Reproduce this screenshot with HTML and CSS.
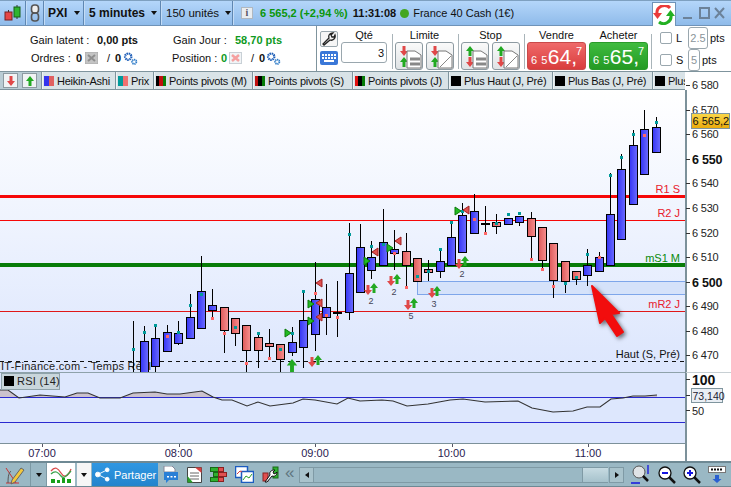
FILE: index.html
```html
<!DOCTYPE html>
<html lang="fr">
<head>
<meta charset="utf-8">
<title>PXI</title>
<link rel="stylesheet" href="styles.css">
</head>
<body>
<svg class="defs" width="0" height="0">
  <defs>
    <linearGradient id="gBlue" x1="0" x2="1" y1="0" y2="0"><stop offset="0" stop-color="#3434f4"/><stop offset="1" stop-color="#6c6cff"/></linearGradient>
    <linearGradient id="gRed" x1="0" x2="1" y1="0" y2="0"><stop offset="0" stop-color="#dd5a5a"/><stop offset="1" stop-color="#f79090"/></linearGradient>
    <linearGradient id="gPlot" x1="0" x2="0" y1="0" y2="1"><stop offset="0" stop-color="#ffffff"/><stop offset="1" stop-color="#dce6fd"/></linearGradient>
    <linearGradient id="gTag" x1="0" x2="0" y1="0" y2="1"><stop offset="0" stop-color="#fbd84a"/><stop offset="1" stop-color="#eaa90a"/></linearGradient>
    <symbol id="up" viewBox="0 0 8 10"><path d="M4 0 8 5H5.500V10H2.500V5H0Z" fill="#22a922"/></symbol>
    <symbol id="down" viewBox="0 0 8 10"><path d="M4 10 8 5H5.500V0H2.500V5H0Z" fill="#e04848"/></symbol>
    <symbol id="gears" viewBox="0 0 16 14">
      <circle cx="5.500" cy="5" r="3.400" fill="none" stroke="#1f5fb8" stroke-width="2.400" stroke-dasharray="1.600 .7"/>
      <circle cx="12" cy="10.500" r="2.300" fill="none" stroke="#2f7cc8" stroke-width="2" stroke-dasharray="1.300 .6"/>
    </symbol>
    <symbol id="docbars" viewBox="0 0 26 26">
      <path d="M11 8H19L25 12V25H11Z" fill="#fff" stroke="#777"/><path d="M14 16H24M14 21H24" stroke="#888" stroke-width="3"/>
    </symbol>
    <symbol id="docslash" viewBox="0 0 26 26">
      <path d="M11 8H19L25 12V25H11Z" fill="#fff" stroke="#777"/><path d="M13 24 24 13" stroke="#888"/>
    </symbol>
  </defs>
</svg>

<div class="app">
  <header class="titlebar">
    <div class="tb-cell tb-logo">
      <svg width="18" height="18" viewBox="0 0 18 18"><path d="M4.500 6V16M13 1V15" stroke="#333"/><rect x="1" y="8" width="7" height="8" fill="#e64646" stroke="#722"/><rect x="10" y="3" width="6" height="10" fill="#2fb52f" stroke="#175f17"/></svg>
    </div>
    <div class="tb-cell tb-link">
      <svg width="10" height="18" viewBox="0 0 10 18" fill="none" stroke="#555" stroke-width="1.600"><rect x="1.500" y="1" width="7" height="8" rx="3" fill="#eee"/><rect x="1.500" y="9" width="7" height="8" rx="3"/></svg>
    </div>
    <div class="tb-cell tb-sym"><b>PXI</b><i class="caret"></i></div>
    <div class="tb-cell tb-period"><b>5 minutes</b><i class="caret"></i></div>
    <div class="tb-cell tb-units"><span>150 unités</span><i class="caret"></i></div>
    <div class="tb-quote">
      <span class="info">i</span>
      <b class="quote">6 565,2 (+2,94 %)</b>
      <b class="clock">11:31:08</b>
      <i class="live"></i>
      <span class="inst">France 40 Cash (1€)</span>
    </div>
    <div class="tb-sync">
      <svg width="22" height="20" viewBox="0 0 22 20" fill="none"><path d="M17 3A7.500 7.500 0 0 0 4 9" stroke="#ea3a3a" stroke-width="3"/><path d="M0 8H9L4.500 14Z" fill="#ea3a3a"/><path d="M6 17A7.500 7.500 0 0 0 18 10" stroke="#22b022" stroke-width="3"/><path d="M13 11H22L17.500 5Z" fill="#22b022"/></svg>
    </div>
    <div class="tb-win">
      <svg width="42" height="12" viewBox="0 0 42 12" fill="none" stroke="#6c8299" stroke-width="2"><path d="M0 11H9"/><rect x="17" y="1" width="9" height="10"/><path d="M32 1 41 11M41 1 32 11"/></svg>
    </div>
  </header>

  <section class="toolbar">
    <div class="acct">
      <div class="acct-row"><span class="c1">Gain latent :</span><b class="v1">0,00 pts</b><span class="c2">Gain Jour :</span><b class="v2 green">58,70 pts</b></div>
      <div class="acct-row r2">
        <span class="c3">Ordres :</span><b class="n1">0</b>
        <svg class="ico1" width="13" height="12" viewBox="0 0 13 12"><rect width="13" height="12" fill="#c4c4c4" stroke="#aaa"/><path d="M3 3 10 9M10 3 3 9" stroke="#8e8e8e" stroke-width="2"/></svg>
        <span class="sl1">/</span><b class="n2">0</b>
        <svg class="gear1" width="15" height="13"><use href="#gears"/></svg>
        <span class="c4">Position :</span><b class="n3 green">0</b>
        <svg class="ico2" width="13" height="12" viewBox="0 0 13 12"><rect x=".5" y=".5" width="12" height="11" fill="#f1f4f6" stroke="#c8d0d6"/><path d="M3 3 10 9M10 3 3 9" stroke="#f5a0a0" stroke-width="2.500"/></svg>
        <span class="sl2">/</span><b class="n4">0</b>
        <svg class="gear2" width="15" height="13"><use href="#gears"/></svg>
      </div>
    </div>

    <div class="order">
      <div class="tools">
        <button class="btn-tool"><svg width="14" height="14" viewBox="0 0 14 14" fill="none" stroke="#222" stroke-width="1.300"><path d="M2 13 1 12 7 6C6 3 8 1 11 1L9 3 10 5 12 5 13 3C14 6 11 9 8 8L2 13Z"/></svg></button>
        <button class="btn-kbd"><svg width="16" height="10" viewBox="0 0 16 10" fill="#fff"><path d="M1 1h2v2H1zM4 1h2v2H4zM7 1h2v2H7zM10 1h2v2h-2zM13 1h2v2h-2zM1 4h2v2H1zM4 4h2v2H4zM7 4h2v2H7zM10 4h2v2h-2zM13 4h2v2h-2zM3 7h10v2H3z"/></svg></button>
      </div>
      <div class="group g-qty"><label class="lbl">Qté</label><div class="qty">3</div></div>
      <i class="vsep"></i>
      <div class="group g-pair"><label class="lbl">Limite</label>
        <div class="pair">
          <button class="btn-ord"><svg class="a" width="8" height="10"><use href="#down"/></svg><svg class="b" width="8" height="10"><use href="#up"/></svg><svg class="d" width="26" height="26"><use href="#docbars"/></svg></button>
          <button class="btn-ord"><svg class="a" width="8" height="10"><use href="#down"/></svg><svg class="b" width="8" height="10"><use href="#up"/></svg><svg class="d" width="26" height="26"><use href="#docslash"/></svg></button>
        </div>
      </div>
      <i class="vsep"></i>
      <div class="group g-pair"><label class="lbl">Stop</label>
        <div class="pair">
          <button class="btn-ord"><svg class="a" width="8" height="10"><use href="#up"/></svg><svg class="b" width="8" height="10"><use href="#down"/></svg><svg class="d" width="26" height="26"><use href="#docbars"/></svg></button>
          <button class="btn-ord"><svg class="a" width="8" height="10"><use href="#up"/></svg><svg class="b" width="8" height="10"><use href="#down"/></svg><svg class="d" width="26" height="26"><use href="#docslash"/></svg></button>
        </div>
      </div>
      <i class="vsep"></i>
      <div class="group g-price"><label class="lbl">Vendre</label>
        <div class="price sell"><span class="pfx">6 5</span><span class="big">64,</span><span class="sup">7</span></div>
      </div>
      <div class="group g-price"><label class="lbl">Acheter</label>
        <div class="price buy"><span class="pfx">6 5</span><span class="big">65,</span><span class="sup">7</span></div>
      </div>
      <i class="vsep"></i>
      <div class="protect">
        <div class="prow"><i class="check"></i><span class="pl">L</span><span class="pbox wide">2.5</span><span>pts</span></div>
        <div class="prow"><i class="check"></i><span class="pl">S</span><span class="pbox">5</span><span>pts</span></div>
      </div>
    </div>
  </section>

  <main class="workspace">
    <div class="panes">
      <nav class="tabs">
        <button class="tab-btn"><svg width="10" height="10"><use href="#down"/></svg></button>
        <button class="tab-btn"><svg width="10" height="10"><use href="#up"/></svg></button>
        <div class="tab"><i class="sw s-ha"></i>Heikin-Ashi</div>
        <div class="tab"><i class="sw s-px"></i>Prix</div>
        <div class="tab"><i class="sw s-pm"></i>Points pivots (M)</div>
        <div class="tab"><i class="sw s-ps"></i>Points pivots (S)</div>
        <div class="tab"><i class="sw s-pj"></i>Points pivots (J)</div>
        <div class="tab"><i class="sw s-k"></i>Plus Haut (J, Pré)</div>
        <div class="tab"><i class="sw s-k"></i>Plus Bas (J, Pré)</div>
        <div class="tab"><i class="sw s-k"></i>Plus</div>
      </nav>

      <svg class="plot" width="685" height="282" viewBox="0 90 685 282">
        <rect x="0" y="90" width="685" height="282" fill="url(#gPlot)"/>
        <rect x="417.500" y="281.500" width="270" height="13" fill="#d5e2fa" stroke="#7ea6ea"/>
        <text class="cap" x="1" y="370">IT-Finance.com - Temps Réel</text>
        <g shape-rendering="crispEdges" fill="none">
          <path d="M0 196H685" stroke="#f60808" stroke-width="3"/>
          <path d="M0 220.500H685" stroke="#f60808"/>
          <path d="M0 265H685" stroke="#087c08" stroke-width="4"/>
          <path d="M0 311.500H685" stroke="#e01818"/>
          <path d="M0 361.500H685" stroke="#111" stroke-dasharray="4 4"/>
          <path class="wick" d="M133.500 321V372M144.500 326V341M155.500 326V372M167.500 325V332M178.500 321V345M190.500 294V339M201.500 256V291M212.500 289V320M224.500 330V353M235.500 333V346M246.500 350V372M258.500 333V368M269.500 329V360M280.500 359V372M292.500 327V356M303.500 291V368M315.500 262V351M326.500 284V335M337.500 281V337M349.500 223V320M360.500 224V247M371.500 241V279M383.500 209V265M394.500 230V270M406.500 233V287M428.500 260V281M440.500 249V278M451.500 222V237M462.500 203V215M474.500 194V211M485.500 206V232M496.500 214V234M508.500 224V225M519.500 222V226M531.500 212V261M542.500 260V271M553.500 280V298M565.500 281V293M576.500 279V285M587.500 249V286M599.500 252V257M610.500 173V214M621.500 154V169M633.500 130V145M644.500 110V129M656.500 117V127"/>
          <g class="bl">
            <rect x="140.500" y="341.500" width="8" height="32"/><rect x="151.500" y="338.500" width="8" height="28"/><rect x="163.500" y="332.500" width="8" height="19"/><rect x="174.500" y="333.500" width="8" height="10"/><rect x="186.500" y="317.500" width="8" height="21"/><rect x="197.500" y="291.500" width="8" height="37"/><rect x="208.500" y="305.500" width="8" height="5"/><rect x="288.500" y="342.500" width="8" height="10"/><rect x="299.500" y="320.500" width="8" height="27"/><rect x="311.500" y="299.500" width="8" height="35"/><rect x="322.500" y="307.500" width="8" height="10"/><rect x="345.500" y="273.500" width="8" height="39"/><rect x="356.500" y="247.500" width="8" height="45"/><rect x="367.500" y="257.500" width="8" height="13"/><rect x="379.500" y="242.500" width="8" height="23"/><rect x="390.500" y="249.500" width="8" height="4"/><rect x="436.500" y="261.500" width="8" height="10"/><rect x="447.500" y="237.500" width="8" height="28"/><rect x="458.500" y="215.500" width="8" height="37"/><rect x="470.500" y="211.500" width="8" height="22"/><rect x="504.500" y="218.500" width="8" height="6"/><rect x="515.500" y="216.500" width="8" height="6"/><rect x="583.500" y="265.500" width="8" height="10"/><rect x="595.500" y="257.500" width="8" height="14"/><rect x="606.500" y="214.500" width="8" height="51"/><rect x="617.500" y="169.500" width="8" height="70"/><rect x="629.500" y="145.500" width="8" height="59"/><rect x="640.500" y="129.500" width="8" height="45"/><rect x="652.500" y="127.500" width="8" height="25"/>
          </g>
          <g class="rd">
            <rect x="220.500" y="307.500" width="8" height="23"/><rect x="231.500" y="318.500" width="8" height="15"/><rect x="242.500" y="325.500" width="8" height="25"/><rect x="254.500" y="337.500" width="8" height="13"/><rect x="265.500" y="343.500" width="8" height="3"/><rect x="276.500" y="344.500" width="8" height="15"/><rect x="402.500" y="251.500" width="8" height="14"/><rect x="413.500" y="258.500" width="8" height="23"/><rect x="424.500" y="269.500" width="8" height="3"/><rect x="492.500" y="222.500" width="8" height="4"/><rect x="527.500" y="218.500" width="8" height="18"/><rect x="538.500" y="227.500" width="8" height="33"/><rect x="549.500" y="243.500" width="8" height="37"/><rect x="561.500" y="261.500" width="8" height="20"/><rect x="572.500" y="271.500" width="8" height="8"/>
          </g>
          <path d="M333 312.500H342M481 223.500H490" stroke="#000" stroke-width="2"/>
          <g fill="#009a9a">
            <rect x="132" y="348" width="3" height="3"/><rect x="143" y="331" width="3" height="3"/><rect x="154" y="324" width="3" height="3"/><rect x="177" y="331" width="3" height="3"/><rect x="189" y="304" width="3" height="3"/><rect x="200" y="293" width="3" height="3"/><rect x="234" y="326" width="3" height="3"/><rect x="257" y="332" width="3" height="3"/><rect x="279" y="348" width="3" height="3"/><rect x="291" y="332" width="3" height="3"/><rect x="302" y="290" width="3" height="3"/><rect x="348" y="233" width="3" height="3"/><rect x="370" y="245" width="3" height="3"/><rect x="382" y="243" width="3" height="3"/><rect x="416" y="275" width="3" height="3"/><rect x="427" y="270" width="3" height="3"/><rect x="439" y="248" width="3" height="3"/><rect x="450" y="221" width="3" height="3"/><rect x="461" y="210" width="3" height="3"/><rect x="495" y="222" width="3" height="3"/><rect x="507" y="213" width="3" height="3"/><rect x="518" y="212" width="3" height="3"/><rect x="564" y="282" width="3" height="3"/><rect x="575" y="276" width="3" height="3"/><rect x="586" y="253" width="3" height="3"/><rect x="609" y="174" width="3" height="3"/><rect x="620" y="156" width="3" height="3"/><rect x="632" y="133" width="3" height="3"/><rect x="655" y="121" width="3" height="3"/>
          </g>
          <g fill="#ff6666">
            <rect x="166" y="335" width="3" height="3"/><rect x="211" y="317" width="3" height="3"/><rect x="223" y="332" width="3" height="3"/><rect x="245" y="362" width="3" height="3"/><rect x="268" y="357" width="3" height="3"/><rect x="314" y="292" width="3" height="3"/><rect x="325" y="314" width="3" height="3"/><rect x="336" y="316" width="3" height="3"/><rect x="393" y="252" width="3" height="3"/><rect x="405" y="286" width="3" height="3"/><rect x="473" y="218" width="3" height="3"/><rect x="484" y="232" width="3" height="3"/><rect x="530" y="258" width="3" height="3"/><rect x="541" y="268" width="3" height="3"/><rect x="552" y="285" width="3" height="3"/><rect x="598" y="256" width="3" height="3"/><rect x="643" y="134" width="3" height="3"/>
          </g>
        </g>
        <g class="tri-g"><path d="M285 329V337L291 333ZM308 300V308L314 304ZM308 317V325L314 321ZM364 257V265L370 261ZM387 244V252L393 248ZM455 207V215L461 211Z"/></g>
        <g class="tri-r"><path d="M322 279V287L316 283ZM322 299V307L316 303ZM322 313V321L316 317ZM378 248V256L372 252ZM401 237V245L395 241ZM469 206V214L463 210Z"/></g>
        <use href="#down" x="364" y="285" width="8" height="10"/><use href="#up" x="370" y="283" width="8" height="10"/>
        <use href="#down" x="387" y="276" width="8" height="10"/><use href="#up" x="393" y="274" width="8" height="10"/>
        <use href="#down" x="404" y="300" width="8" height="10"/><use href="#up" x="410" y="298" width="8" height="10"/>
        <use href="#down" x="428" y="288" width="8" height="10"/><use href="#up" x="433" y="286" width="8" height="10"/>
        <use href="#down" x="455" y="259" width="8" height="10"/><use href="#up" x="461" y="256" width="8" height="10"/>
        <use href="#up" x="286" y="359" width="12" height="13"/>
        <use href="#down" x="308" y="357" width="8" height="10"/><use href="#up" x="314" y="355" width="8" height="10"/>
        <g class="mark"><text x="371" y="304">2</text><text x="394" y="295">2</text><text x="411" y="319">5</text><text x="434" y="307">3</text><text x="462" y="277">2</text></g>
        <g class="lv">
          <text x="680" y="193" class="l-r">R1 S</text>
          <text x="680" y="217" class="l-r">R2 J</text>
          <text x="680" y="262" class="l-g">mS1 M</text>
          <text x="680" y="308" class="l-r">mR2 J</text>
          <text x="680" y="358" class="l-k">Haut (S, Pré)</text>
        </g>
        <path class="pointer" d="M592 286 619 313 611 314 623 332 617 336 605 318 600 323Z"/>
      </svg>

      <svg class="rsi" width="685" height="71" viewBox="0 372 685 71">
        <defs><clipPath id="cAbove"><rect x="0" y="372" width="685" height="25"/></clipPath></defs>
        <rect x="0" y="372" width="685" height="71" fill="#dde7fd"/>
        <path d="M0 372.500H685" stroke="#8ea2aa" shape-rendering="crispEdges"/>
        <path clip-path="url(#cAbove)" fill="#cbc2cd" d="M0 397V390L8 390 19 398 40 395 65 397 77 393 88 393 100 398 120 398 133 393 155 392 167 394 180 394 202 391 213 397 611 397 623 398 633 396 645 396 657 395V397Z"/>
        <g shape-rendering="crispEdges" fill="none" stroke="#2a2ad0"><path d="M0 397.500H685M0 422.500H685"/></g>
        <path fill="none" stroke="#333" stroke-width="1.100" d="M0 390 8 390 19 398 40 395 65 397 77 393 88 393 100 398 120 398 133 393 155 392 167 394 180 394 202 391 213 397 222 400 232 400 247 406 258 402 270 406 293 403 303 399 315 400 337 404 348 398 360 401 382 400 393 401 407 406 428 404 450 400 463 399 485 402 518 401 532 408 553 412 573 411 587 407 600 407 611 399 623 398 633 396 645 396 657 395"/>
        <rect class="leg" x="1.500" y="373.500" width="58" height="16"/>
        <rect x="4" y="376" width="10" height="10" fill="#000"/>
        <text class="cap" x="17" y="385">RSI (14)</text>
      </svg>
    </div>

    <svg class="axis" width="46" height="371" viewBox="685 72 46 371">
      <rect x="685" y="72" width="46" height="371" fill="#fff"/>
      <g shape-rendering="crispEdges">
        <path d="M685.500 90V443M686.500 90V443" stroke="#7c919a"/>
        <path d="M686 372.500H731" stroke="#c8d0d4"/>
        <path stroke="#333" d="M686 85.500H690M686 110.500H690M686 134.500H690M686 159.500H690M686 183.500H690M686 208.500H690M686 233.500H690M686 257.500H690M686 282.500H690M686 306.500H690M686 331.500H690M686 355.500H690M686 379.500H690M686 395.500H690M686 410.500H690"/>
      </g>
      <g class="px">
        <text x="692" y="89">6 580</text><text x="692" y="114">6 570</text><text x="692" y="138">6 560</text><text class="bd" x="692" y="164">6 550</text><text x="692" y="187">6 540</text><text x="692" y="212">6 530</text><text x="692" y="237">6 520</text><text x="692" y="261">6 510</text><text class="bd" x="692" y="287">6 500</text><text x="692" y="310">6 490</text><text x="692" y="335">6 480</text><text x="692" y="359">6 470</text>
        <text class="bd hi" x="692" y="385">100</text><text x="692" y="415">50</text>
      </g>
      <rect x="691.500" y="113.500" width="38" height="15" fill="url(#gTag)" stroke="#7f959e"/>
      <text class="tagt" x="692.500" y="125">6 565,2</text>
      <rect x="691.500" y="388.500" width="31" height="14" fill="#e9eef4" stroke="#7f959e"/>
      <text class="tagt sm" x="692.500" y="399.500">73,140</text>
    </svg>
  </main>

  <div class="timeaxis">
    <span class="t">07:00</span><span class="t">08:00</span><span class="t">09:00</span><span class="t">10:00</span><span class="t">11:00</span>
  </div>

  <footer class="bottombar">
    <button class="bb bb-pen"><svg width="20" height="20" viewBox="0 0 20 20" fill="none"><path d="M1 3 11 18M1 18H14" stroke="#c33"/><path d="M3 18C3 10 4 8 6 6" stroke="#555"/><path d="M7 15 16 3 19 5 10 17 6 19Z" fill="#f3c83c" stroke="#666"/></svg></button>
    <button class="bb bb-caret"><i class="caret"></i></button>
    <button class="bb bb-ind"><svg width="22" height="18" viewBox="0 0 22 18" fill="none"><path d="M1 5C5 0 8 2 11 7S18 11 21 3" stroke="#d84a4a" stroke-width="1.300"/><path d="M1 8C5 4 8 6 11 10S18 8 21 5" stroke="#3aa24a" stroke-width="1.300"/><path d="M1 17V13H5V17ZM7 17V14H10V17ZM12 17V12H15V17ZM17 17V13H21V17Z" fill="#19a019"/></svg></button>
    <button class="bb bb-caret2"><i class="caret"></i></button>
    <button class="share"><svg width="15" height="15" viewBox="0 0 16 16" fill="#fff" stroke="#fff"><circle cx="3" cy="8" r="2.500"/><circle cx="13" cy="3" r="2"/><circle cx="13" cy="13" r="2"/><path d="M3 8 13 3M3 8 13 13"/></svg><span>Partager</span></button>
    <div class="bb-icons">
      <svg width="16" height="17" viewBox="0 0 16 17"><path d="M1 0H9L12 3V6H1Z" fill="#fff" stroke="#889"/><path d="M1 6H15V14H6L3 17V14H1Z" fill="#2a7fd6"/><path d="M4 10h2v1.500H4zM7.500 10h2v1.500h-2zM11 10h2v1.500h-2z" fill="#fff"/></svg>
      <svg width="15" height="17" viewBox="0 0 15 17"><path d="M.5 1.500H14.500V16.500H.5Z" fill="#fff" stroke="#444"/><path d="M3 7H12M3 10H12M3 13H12" stroke="#666"/><path d="M8 1.500 14.500 1.500 14.500 7Z" fill="#d84040"/><path d="M.5 16.500V10L6 16.500Z" fill="#2aa02a"/></svg>
      <svg width="17" height="17" viewBox="0 0 17 17" shape-rendering="crispEdges"><path d="M.5 1.500H8.500V5.500H.5ZM3.500 6.500H8.500V10.500H3.500ZM.5 11.500H8.500V15.500H.5Z" fill="#2fb02f" stroke="#176a17"/><path d="M8.500 1.500H13.500V5.500H8.500ZM8.500 6.500H16.500V10.500H8.500ZM8.500 11.500H13.500V15.500H8.500Z" fill="#e05050" stroke="#8a2020"/></svg>
      <svg width="19" height="17" viewBox="0 0 19 17"><rect x=".5" y=".5" width="12" height="11" fill="#fff" stroke="#1c5cc0" stroke-width="1.500"/><rect x="6.500" y="5.500" width="12" height="11" fill="#fff" stroke="#1c5cc0" stroke-width="1.500"/><path d="M8 14 11 10 14 12 17 8" fill="none" stroke="#2aa02a"/><path d="M2 8 5 5 7 6" fill="none" stroke="#d84040"/></svg>
      <svg width="17" height="17" viewBox="0 0 17 17"><rect x="11" y="1" width="5" height="11" fill="#2fb02f" stroke="#176a17"/><rect x="1" y="7" width="5" height="8" fill="#e05050" stroke="#8a2020"/><path d="M3 16 8 9C7 6 9 4 13 4L11 6 12 8 14 7 15 6C15 9 13 11 10 10L5 16Z" fill="#fff" stroke="#111"/></svg>
    </div>
    <span class="chev">«</span>
    <div class="scroll">
      <button class="sb-btn"><i class="arr-l"></i></button>
      <div class="sb-track"><i class="sb-thumb"></i></div>
      <button class="sb-btn"><i class="arr-r"></i></button>
    </div>
    <div class="zooms">
      <svg width="21" height="21" viewBox="0 0 21 21"><circle cx="9" cy="8" r="6" fill="#dfe3e6" stroke="#555"/><path d="M13 12 18 17" stroke="#111" stroke-width="2.500"/><path d="M18 1V10M1 19H10" stroke="#1414e0" stroke-width="1.300"/></svg>
      <svg width="18" height="18" viewBox="0 0 18 18"><circle cx="7" cy="7" r="6" fill="#fff" stroke="#111" stroke-width="1.300"/><path d="M4 7H10" stroke="#1414e0" stroke-width="2"/><path d="M11 11 17 17" stroke="#111" stroke-width="2.500"/></svg>
      <svg width="18" height="18" viewBox="0 0 18 18"><circle cx="7" cy="7" r="6" fill="#fff" stroke="#111" stroke-width="1.300"/><path d="M4 7H10M7 4V10" stroke="#1414e0" stroke-width="2"/><path d="M11 11 17 17" stroke="#111" stroke-width="2.500"/></svg>
      <svg width="18" height="17" viewBox="0 0 18 17"><rect x=".5" y=".5" width="17" height="6" fill="#fff" stroke="#777"/><path d="M3 3.500H15" stroke="#111" stroke-width="2" stroke-dasharray="2 1"/><path d="M7 9H11V13H13.500L9 17 4.500 13H7Z" fill="#2a5fd0"/></svg>
    </div>
  </footer>
</div>
</body>
</html>
```

FILE: styles.css
```css
* { box-sizing: border-box; }
html, body { margin: 0; padding: 0; }
body { width: 731px; height: 487px; overflow: hidden; font: 11px "Liberation Sans", Arial, sans-serif; color: #111; background: #fff; }
button { margin: 0; padding: 0; font: inherit; cursor: default; }
.defs { position: absolute; }
.app { width: 731px; height: 487px; display: flex; flex-direction: column; overflow: hidden; }
.green { color: #0f9a1e; }

/* Title bar */
.titlebar { height: 26px; flex: none; display: flex; align-items: stretch; white-space: nowrap; background: linear-gradient(#b4d6fa, #8fbbea); border-top: 1px solid #7ea0c0; border-bottom: 1px solid #6f93b8; }
.tb-cell { display: flex; align-items: center; border-right: 1px solid #5f87b2; box-shadow: 1px 0 0 #c3dcf6; flex: none; }
.tb-logo { width: 26px; justify-content: center; }
.tb-link { width: 18px; justify-content: center; }
.tb-sym { width: 40px; padding-left: 4px; font-size: 12px; gap: 7px; }
.tb-period { width: 77px; padding-left: 5px; font-size: 12px; gap: 6px; }
.tb-units { width: 72px; padding-left: 5px; font-size: 11.500px; gap: 6px; }
.caret { display: inline-block; width: 0; height: 0; border: 3.500px solid transparent; border-top: 4px solid #111; border-bottom: 0; }
.tb-quote { flex: 1; display: flex; align-items: center; padding-left: 8px; font-size: 11px; }
.info { width: 12px; height: 12px; background: #e9edf0; border: 1px solid #b0b8c0; font: bold 10px "Liberation Serif", serif; color: #556; text-align: center; line-height: 10px; }
.quote { color: #0a960a; margin-left: 7px; }
.clock { margin-left: 5px; }
.live { width: 9px; height: 9px; border-radius: 50%; background: #44a620; margin-left: 4px; }
.inst { margin-left: 4px; }
.tb-sync { width: 24px; margin-top: 1px; background: #fff; border: 1px solid #6f93b8; border-bottom: 0; display: flex; align-items: center; justify-content: center; margin-bottom: -1px; flex: none; }
.tb-win { width: 55px; display: flex; align-items: center; justify-content: center; flex: none; }

/* Toolbar */
.toolbar { height: 46px; flex: none; display: flex; border-bottom: 1px solid #7f949d; background: #fff; white-space: nowrap; }
.acct { width: 317px; flex: none; border-right: 1px solid #7f949d; padding: 6px 0 0 30px; }
.acct-row { display: flex; align-items: center; height: 16px; }
.r2 { margin-top: 2px; padding-left: 1px; }
.c1 { width: 67px; flex: none; }
.v1 { width: 76px; flex: none; }
.c2 { width: 62px; flex: none; }
.c3 { width: 45px; flex: none; }
.n1 { width: 9px; flex: none; }
.ico1 { margin-right: 9px; flex: none; }
.sl1 { width: 8px; flex: none; }
.n2 { width: 8px; flex: none; }
.gear1 { margin-right: 34px; flex: none; }
.c4 { width: 49px; flex: none; }
.n3 { width: 8px; flex: none; }
.ico2 { margin-right: 9px; flex: none; }
.sl2 { width: 8px; flex: none; }
.n4 { width: 7px; flex: none; }
.order { flex: 1; display: flex; align-items: flex-start; padding: 5px 0 0 3px; }
.tools { width: 18px; display: flex; flex-direction: column; gap: 4px; margin-right: 3px; }
.btn-tool { width: 18px; height: 16px; border: 1px solid #9aa7ae; border-radius: 2px; background: #f6f6f6; display: flex; align-items: center; justify-content: center; }
.btn-kbd { width: 18px; height: 14px; border: 0; border-radius: 2px; background: #3b78d8; display: flex; align-items: center; justify-content: center; }
.group { display: flex; flex-direction: column; align-items: center; }
.lbl { height: 11px; line-height: 8px; }
.g-qty { width: 46px; }
.qty { width: 46px; height: 21px; border: 1px solid #9aa7ae; border-radius: 3px; text-align: right; padding: 2px 2px 0 0; line-height: 16px; }
.vsep { width: 1px; height: 35px; margin: 3px 2px 0 5px; background: #a9b4b9; }
.g-pair { width: 59px; }
.pair { display: flex; gap: 3px; }
.btn-ord { position: relative; width: 28px; height: 28px; border: 1px solid #8d9aa1; border-radius: 3px; background: linear-gradient(#fafafa, #dfe3e5); }
.btn-ord .a { position: absolute; left: 4px; top: 3px; }
.btn-ord .b { position: absolute; left: 4px; top: 14px; }
.btn-ord .d { position: absolute; left: 0; top: 0; }
.g-pair + .vsep { margin-left: 4px; }
.g-price { width: 59px; margin-right: 3px; }
.g-price + .vsep { margin-left: 0; margin-right: 8px; }
.price { width: 59px; height: 28px; border-radius: 3px; color: #fff; display: flex; align-items: flex-end; padding-left: 3px; position: relative; }
.sell { background: linear-gradient(#ef6a6a, #d93d3d); border: 1px solid #c94a4a; }
.buy { background: linear-gradient(#3fbb3f, #249a24); border: 1px solid #2a9a2a; }
.pfx { font-size: 11px; letter-spacing: .5px; line-height: 17px; }
.big { font-size: 21px; line-height: 25px; }
.sup { position: absolute; right: 3px; top: 2px; font-size: 11px; line-height: 13px; }
.protect { display: flex; flex-direction: column; margin-top: -4px; }
.prow { display: flex; align-items: center; height: 22px; }
.check { width: 12px; height: 12px; border: 1px solid #9aa7ae; border-radius: 2px; margin-right: 4px; flex: none; }
.pl { width: 12px; flex: none; }
.pbox { width: 12px; height: 22px; border: 1px solid #9aa7ae; border-radius: 3px; color: #8a949a; text-align: center; line-height: 20px; margin-right: 2px; flex: none; }
.wide { width: 20px; }

/* Workspace */
.workspace { flex: none; height: 371px; display: flex; }
.panes { width: 685px; display: flex; flex-direction: column; flex: none; }
.tabs { height: 18px; flex: none; display: grid; grid-template-columns: 19px 19px 74px 38px 99px 100px 96px 104px 100px 33px; background: #b9ccd4; overflow: hidden; border-bottom: 1px solid #7f949d; padding-left: 3px; }
.tab-btn { width: 15px; height: 15px; margin-top: 1px; border: 1px solid #8d9aa1; background: #f0f3f4; display: flex; align-items: center; justify-content: center; }
.tab { display: flex; align-items: center; gap: 3px; padding-left: 2px; border-left: 1px solid #7f949d; background: #d9e3e7; white-space: nowrap; overflow: hidden; letter-spacing: -.25px; box-shadow: inset 1px 0 0 #eef3f5; }
.sw { display: block; width: 10px; height: 10px; flex: none; }
.s-ha { background: linear-gradient(90deg, #3333ee 50%, #e06060 50%); }
.s-px { background: linear-gradient(90deg, #009a9a 50%, #f07070 50%); }
.s-pm { background: linear-gradient(90deg, #000 33%, #c01010 33% 66%, #087c08 66%); }
.s-ps { background: linear-gradient(90deg, #c01010 33%, #000 33% 66%, #087c08 66%); }
.s-pj { background: linear-gradient(90deg, #e01010 33%, #000 33% 66%, #087c08 66%); }
.s-k { background: #000; }
.plot, .rsi, .axis { display: block; flex: none; }
.wick { stroke: #000; fill: none; }
.bl rect { fill: url(#gBlue); stroke: #000; }
.rd rect { fill: url(#gRed); stroke: #000; }
.cap { font-size: 11px; fill: #222; letter-spacing: .25px; }
.tri-g path { fill: #22bb22; stroke: #0a7a0a; }
.tri-r path { fill: #e05050; stroke: #a02020; }
.mark text { font-size: 9px; fill: #445; text-anchor: middle; }
.lv text { font-size: 11px; text-anchor: end; }
.l-r { fill: #e8202c; }
.l-g { fill: #0a8a0a; }
.l-k { fill: #111; }
.pointer { fill: #f20d0d; stroke: #f20d0d; stroke-width: 2; stroke-linejoin: round; filter: drop-shadow(2px 2px 2px rgba(0,0,0,.55)); }
.leg { fill: #c9d6dc; stroke: #8ea2aa; }
.px text { font-size: 11px; fill: #222; letter-spacing: -.2px; }
.px .bd { font-size: 12.500px; font-weight: bold; fill: #111; letter-spacing: -.2px; }
.px .hi { font-size: 14px; letter-spacing: 0; }
.tagt { font-size: 11px; fill: #111; }
.sm { font-size: 10.500px; fill: #223; }

/* Time axis */
.timeaxis { height: 18px; flex: none; width: 687px; display: grid; grid-template-columns: repeat(5, 136.500px); padding-left: 42px; background: #fff; border-right: 2px solid #7c919a; border-top: 1px solid #7c919a; }
.t { position: relative; width: 40px; margin-left: -20px; text-align: center; line-height: 19px; color: #2a1a50; }
.t::before { content: ""; position: absolute; left: 20px; top: 0; width: 1px; height: 3px; background: #556; }

/* Bottom bar */
.bottombar { flex: 1; display: flex; align-items: stretch; background: #9ab8c4; border-top: 2px solid #6e8994; border-bottom: 1px solid #6e8994; }
.bb { border: 0; background: transparent; display: flex; align-items: center; justify-content: center; flex: none; }
.bb-pen { width: 31px; border-right: 1px solid #7c99a4; }
.bb-caret { width: 16px; border-right: 1px solid #7c99a4; }
.bb-ind { width: 29px; background: #fff; border-right: 1px solid #9ab8c4; }
.bb-caret2 { width: 15px; background: #f6f6f6; border-left: 1px solid #9ab8c4; }
.share { width: 66px; flex: none; margin-left: 1px; border: 0; background: linear-gradient(#2f97e2, #2484cc); color: #fff; display: flex; align-items: center; gap: 4px; padding-left: 3px; font-size: 11px; white-space: nowrap; }
.bb-icons { display: flex; align-items: center; gap: 8px; margin-left: 5px; flex: none; }
.chev { margin-left: 6px; width: 14px; font-size: 17px; line-height: 20px; color: #5f7680; flex: none; }
.scroll { width: 325px; height: 16px; margin-top: 4px; display: flex; flex: none; }
.sb-btn { width: 15px; height: 16px; flex: none; background: #a9c3cc; border: 1px solid #7f9aa5; display: flex; align-items: center; justify-content: center; }
.arr-l, .arr-r { width: 0; height: 0; border: 3.500px solid transparent; }
.arr-l { border-right: 4px solid #111; border-left: 0; }
.arr-r { border-left: 4px solid #111; border-right: 0; }
.sb-track { flex: 1; display: flex; justify-content: flex-end; background: #9ab8c4; border-top: 1px solid #7f9aa5; border-bottom: 1px solid #7f9aa5; margin-right: 1px; }
.sb-thumb { width: 26px; background: linear-gradient(#c7dbe2, #a6c2cc); border-left: 1px solid #7f9aa5; }
.zooms { display: flex; align-items: center; gap: 7px; margin-left: 6px; flex: none; }
```
